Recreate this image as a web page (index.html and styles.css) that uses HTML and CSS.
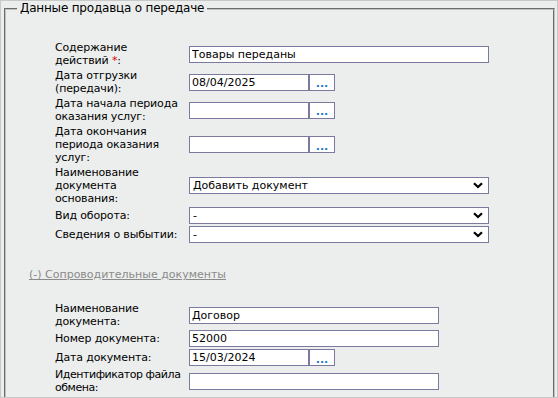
FILE: index.html
```html
<!DOCTYPE html>
<html lang="ru">
<head>
<meta charset="utf-8">
<title>Данные продавца о передаче</title>
<link rel="stylesheet" href="styles.css">
</head>
<body>
<div class="frame">
  <fieldset class="group">
    <legend class="group-title">Данные продавца о передаче</legend>
    <div class="group-body">
      <div class="form form-main">
        <div class="label">Содержание<br>действий <span class="req">*</span>:</div>
        <div class="field"><input class="input input-wide" type="text" value="Товары переданы"></div>

        <div class="label">Дата отгрузки<br>(передачи):</div>
        <div class="field"><input class="input input-date" type="text" value="08/04/2025"><button class="pick" type="button">...</button></div>

        <div class="label">Дата начала периода<br>оказания услуг:</div>
        <div class="field"><input class="input input-date" type="text" value=""><button class="pick" type="button">...</button></div>

        <div class="label">Дата окончания<br>периода оказания<br>услуг:</div>
        <div class="field"><input class="input input-date" type="text" value=""><button class="pick" type="button">...</button></div>

        <div class="label">Наименование<br>документа<br>основания:</div>
        <div class="field"><select class="input select input-wide"><option>Добавить документ</option></select></div>

        <div class="label">Вид оборота:</div>
        <div class="field"><select class="input select input-wide"><option>-</option></select></div>

        <div class="label">Сведения о выбытии:</div>
        <div class="field"><select class="input select input-wide"><option>-</option></select></div>
      </div>

      <div class="toggle"><a class="toggle-link" href="#">(-) Сопроводительные документы</a></div>

      <div class="form form-docs">
        <div class="label">Наименование<br>документа:</div>
        <div class="field"><input class="input input-mid" type="text" value="Договор"></div>

        <div class="label">Номер документа:</div>
        <div class="field"><input class="input input-mid" type="text" value="52000"></div>

        <div class="label">Дата документа:</div>
        <div class="field"><input class="input input-date" type="text" value="15/03/2024"><button class="pick" type="button">...</button></div>

        <div class="label label-tight">Идентификатор файла<br>обмена:</div>
        <div class="field"><input class="input input-mid" type="text" value=""></div>
      </div>
    </div>
  </fieldset>
</div>
</body>
</html>
```

FILE: styles.css
```css
html, body {
  margin: 0;
  padding: 0;
  background: #eceeed;
}

body {
  font-family: "DejaVu Sans", Verdana, sans-serif;
  font-size: 11px;
  color: #000;
}

.frame {
  box-sizing: border-box;
  width: 558px;
  height: 398px;
  border: 1px solid #c8c8c8;
  overflow: hidden;
  background: #eceeed;
  padding: 0 2px 0 3px;
}

.group {
  margin: 0;
  padding: 0 0 0 11px;
  border: 2px groove #c0c0c0;
  height: 470px;
  box-sizing: border-box;
}

.group-title {
  font-size: 12px;
  line-height: 15px;
  padding: 0 3px;
  letter-spacing: -0.2px;
  color: #000;
}

.group-body {
  padding: 24px 0 0 12px;
}

.form {
  display: grid;
  grid-template-columns: 134px auto;
  align-items: center;
  justify-content: start;
  margin-left: 26px;
}

.label {
  line-height: 13px;
  padding: 1px 0;
  white-space: nowrap;
  letter-spacing: -0.15px;
}

.label-tight {
  letter-spacing: -0.45px;
}

.req {
  color: #e00000;
}

.field {
  display: flex;
  padding: 1px 0;
}

.input {
  box-sizing: border-box;
  height: 17px;
  margin: 0;
  border: 1px solid #7b7a9e;
  background: #fff;
  font-family: "DejaVu Sans", Verdana, sans-serif;
  font-size: 11px;
  color: #000;
  padding: 0 2px;
  outline: none;
}

.input-wide {
  width: 300px;
}

.input-mid {
  width: 250px;
}

.input-date {
  width: 120px;
}

.select {
  appearance: none;
  -webkit-appearance: none;
  border-radius: 0;
  padding: 0 18px 0 3px;
  background: #fff url("data:image/svg+xml;utf8,<svg xmlns='http://www.w3.org/2000/svg' width='10' height='7' viewBox='0 0 10 7'><path d='M1 1.2 L5 5 L9 1.2' fill='none' stroke='black' stroke-width='2.2'/></svg>") no-repeat right 5px center;
}

.pick {
  box-sizing: border-box;
  width: 26px;
  height: 17px;
  margin: 0;
  padding: 3px 0 0 0;
  border: 1px solid #7b7a9e;
  background: #fff;
  color: #1f7ad0;
  font-family: "DejaVu Sans", Verdana, sans-serif;
  font-size: 11px;
  font-weight: bold;
  line-height: 11px;
}

.toggle {
  margin: 24px 0 20px 0;
  line-height: 13px;
}

.toggle-link {
  color: #8a8a8a;
  text-decoration: underline;
}
```
